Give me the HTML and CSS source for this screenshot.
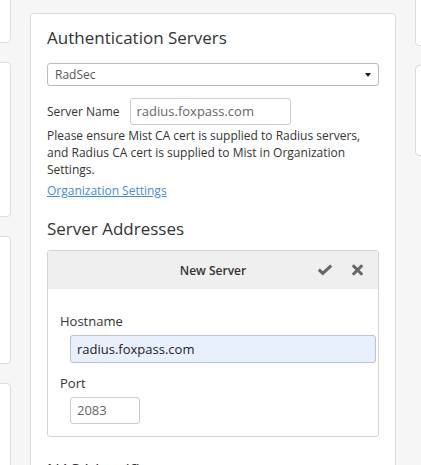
FILE: index.html
```html
<!DOCTYPE html>
<html lang="en">
<head>
    <meta charset="UTF-8">
    <title>Authentication Servers</title>
    <link rel="stylesheet" href="styles.css">
</head>
<body>
    <div class="page">
        <div class="side side-left">
            <div class="card card-l1"></div>
            <div class="card card-l2"></div>
            <div class="card card-l3"></div>
            <div class="card card-l4"></div>
        </div>

        <div class="panel">
            <h2 class="panel-title">Authentication Servers</h2>
            <div class="select">
                <span>RadSec</span>
                <span class="caret"></span>
            </div>

            <div class="field-row">
                <label>Server Name</label>
                <div class="input input-name">radius.foxpass.com</div>
            </div>
            <p class="note">Please ensure Mist CA cert is supplied to Radius servers, and Radius CA cert is supplied to Mist in Organization Settings.</p>
            <a class="link" href="#">Organization Settings</a>

            <h2 class="panel-title section-title">Server Addresses</h2>
            <div class="server-box">
                <div class="server-head">
                    <span class="server-head-title">New Server</span>
                    <div class="server-actions">
                        <svg class="icon-check" width="16" height="12" viewBox="0 0 16 12">
                            <polyline points="1.8,5.6 5.8,9.4 14.2,1.6" fill="none" stroke="#666" stroke-width="3"/>
                        </svg>
                        <svg class="icon-close" width="13" height="12" viewBox="0 0 13 12">
                            <path d="M1.8,1.3 L11.2,10.7 M11.2,1.3 L1.8,10.7" fill="none" stroke="#666" stroke-width="3"/>
                        </svg>
                    </div>
                </div>
                <div class="server-body">
                    <label class="label-block">Hostname</label>
                    <div class="input input-host">radius.foxpass.com</div>
                    <label class="label-block label-port">Port</label>
                    <div class="input input-port">2083</div>
                </div>
            </div>

            <h2 class="panel-title nas-title">NAS Identifier</h2>
        </div>

        <div class="side side-right">
            <div class="card card-r1"></div>
            <div class="card card-r2"></div>
        </div>
    </div>
</body>
</html>
```

FILE: styles.css
```css
* {
    margin: 0;
    padding: 0;
    box-sizing: border-box;
}

body {
    font-family: 'Open Sans', 'Liberation Sans', sans-serif;
    background-color: #f6f6f6;
    color: #333;
    overflow: hidden;
    height: 465px;
}

.page {
    display: flex;
    align-items: flex-start;
    gap: 19px;
}

/* neighbouring cards, mostly scrolled out of view */
.side {
    display: flex;
    flex-direction: column;
    gap: 19px;
    flex: none;
    width: 80px;
}

.side-left {
    margin-left: -69px;
    margin-top: -100px;
}

.side-right {
    margin-top: -100px;
}

.card {
    background-color: #fff;
    border: 1px solid #dcdcdc;
    border-radius: 4px;
}

.card-l1 { height: 143px; }
.card-l2 { height: 155px; }
.card-l3 { height: 128px; }
.card-l4 { height: 200px; }
.card-r1 { height: 146px; }
.card-r2 { height: 91px; }

.panel {
    flex: none;
    width: 366px;
    height: 600px;
    margin-top: 13px;
    padding: 12px 16px 0;
    background-color: #fff;
    border: 1px solid #dcdcdc;
    border-radius: 4px;
}

.panel-title {
    font-size: 17px;
    font-weight: normal;
    line-height: 24px;
    color: #333;
}

.select {
    display: flex;
    justify-content: space-between;
    align-items: center;
    height: 23px;
    margin-top: 13px;
    padding: 0 7px;
    border: 1px solid #bbb;
    border-radius: 3px;
    font-size: 12px;
    color: #555;
}

.caret {
    width: 0;
    height: 0;
    border-left: 3.5px solid transparent;
    border-right: 3.5px solid transparent;
    border-top: 4px solid #222;
}

.field-row {
    display: flex;
    align-items: center;
    gap: 10px;
    margin-top: 12px;
    font-size: 12px;
}

.input {
    height: 27px;
    padding: 0 6px;
    border: 1px solid #ccc;
    border-radius: 3px;
    font-size: 13px;
    line-height: 25px;
    color: #666;
    background-color: #fff;
}

.input-name {
    width: 161px;
}

.note {
    margin-top: 2px;
    font-size: 12px;
    line-height: 17px;
}

.link {
    display: inline-block;
    font-size: 12px;
    line-height: 19px;
    color: #3e8ddd;
    text-decoration: underline;
}

.section-title {
    margin-top: 17px;
}

.server-box {
    margin-top: 9px;
    border: 1px solid #d4d4d4;
    border-radius: 3px;
}

.server-head {
    position: relative;
    height: 38px;
    display: flex;
    align-items: center;
    justify-content: center;
    background-color: #efefef;
}

.server-head-title {
    font-size: 12px;
    font-weight: 600;
    color: #333;
}

.server-actions {
    position: absolute;
    right: 14px;
    top: 13px;
    display: flex;
    gap: 18px;
}

.server-body {
    padding: 23px 2px 12px 12px;
}

.label-block {
    display: block;
    font-size: 13px;
    line-height: 18px;
}

.input-host {
    margin: 5px 0 0 10px;
    height: 28px;
    line-height: 26px;
    background-color: #e8f0fe;
    border-color: #b9c3d2;
    color: #222;
}

.label-port {
    margin-top: 11px;
}

.input-port {
    width: 70px;
    margin: 5px 0 0 10px;
}

.nas-title {
    margin-top: 21px;
}
```
